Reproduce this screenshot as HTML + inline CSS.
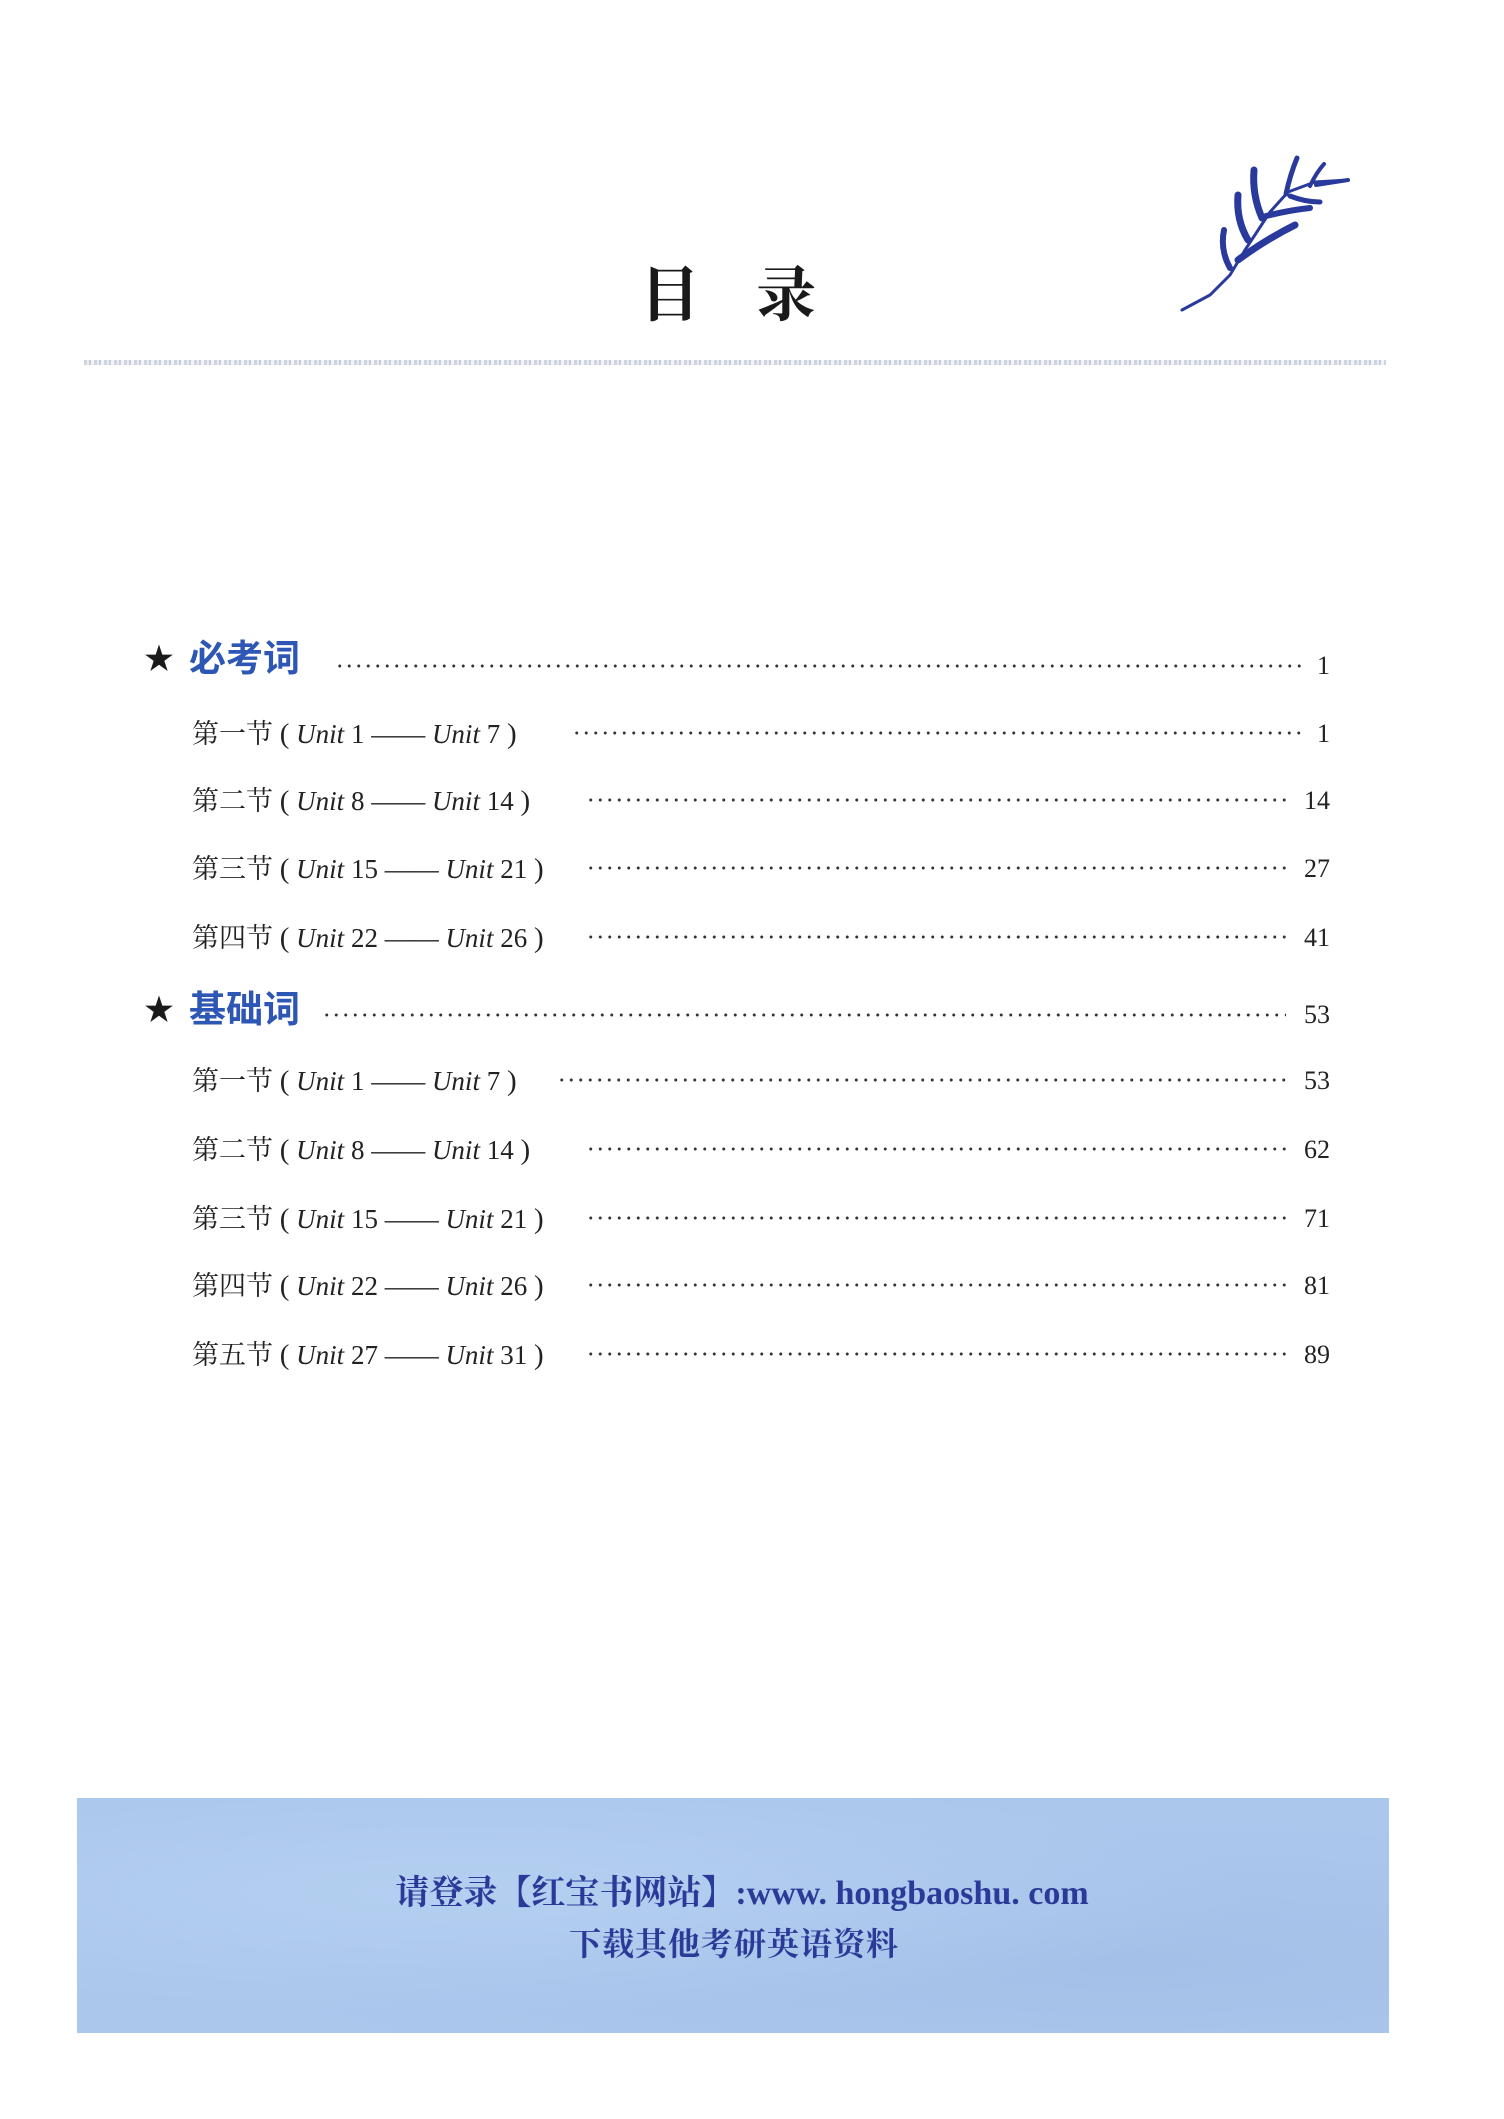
<!DOCTYPE html>
<html><head><meta charset="utf-8">
<style>
html,body{margin:0;padding:0;background:#fff;}
body{width:1504px;height:2119px;position:relative;overflow:hidden;font-family:"Liberation Serif","Noto Serif CJK SC",serif;}
.title{position:absolute;top:258px;left:640px;font-family:"Liberation Serif","Noto Serif CJK SC",serif;font-size:60px;font-weight:bold;color:#1a1a1a;letter-spacing:56px;line-height:76px;}
.rule{position:absolute;left:84px;top:360px;width:1302px;height:5px;background:repeating-linear-gradient(90deg,#c9d0dc 0 3px,#e8ebf1 3px 5px,#bfc7d6 5px 7px,#f2f3f6 7px 10px);opacity:.9;}
.lab{position:absolute;white-space:nowrap;color:#222;font-size:27px;line-height:40px;}
.lab i{font-style:italic;}
.lab .p{font-size:29px;}
.dots{position:absolute;height:6px;background-image:radial-gradient(circle,#333 1.3px,transparent 1.7px);background-size:9.5px 6px;background-repeat:repeat-x;}
.pg{position:absolute;color:#222;font-size:26px;line-height:40px;text-align:right;width:80px;}
.h{color:#2e56b4;font-family:"Liberation Sans","Noto Sans CJK SC",sans-serif;font-weight:bold;font-size:37px;}
.star{position:absolute;left:144px;font-size:30px;color:#1a1a1a;line-height:40px;}
.box{position:absolute;left:77px;top:1798px;width:1312px;height:235px;background:#abc7ec;background-image:radial-gradient(ellipse at 30% 40%,#b4cff0 0,transparent 60%),radial-gradient(ellipse at 80% 70%,#a4c0e8 0,transparent 60%);}
.b1{position:absolute;top:1872px;left:-10px;width:1504px;text-align:center;color:#2b3a98;font-size:34px;font-weight:bold;line-height:44px;font-family:"Liberation Serif","Noto Serif CJK SC",serif;}
.b2{position:absolute;top:1924px;left:-18px;width:1504px;text-align:center;color:#2b3a98;font-size:32px;font-weight:bold;line-height:40px;letter-spacing:1px;font-family:"Liberation Serif","Noto Serif CJK SC",serif;}
</style></head><body>
<div class="title">目录</div>
<svg style="position:absolute;left:1170px;top:140px" width="200" height="190" viewBox="0 0 200 190">
<g fill="none" stroke="#2a3a9c" stroke-linecap="round">
<path d="M12 170 L40 155 L60 135 L75 110 L100 72 L118 52 L145 42 L178 40" stroke-width="3"/>
<path d="M60 128 Q50 110 54 90" stroke-width="6"/>
<path d="M68 120 Q95 100 125 85" stroke-width="7"/>
<path d="M78 100 Q66 80 68 55" stroke-width="7"/>
<path d="M92 78 Q82 55 84 30" stroke-width="7"/>
<path d="M96 76 Q120 70 140 68" stroke-width="6"/>
<path d="M116 54 Q120 35 127 18" stroke-width="5"/>
<path d="M120 56 Q135 62 150 62" stroke-width="5"/>
<path d="M140 46 Q146 33 154 24" stroke-width="4"/>
<path d="M146 45 Q165 42 178 40" stroke-width="4"/>
</g></svg>
<div class="rule"></div>

<div class="star" style="top:640px">★</div>
<div class="lab h" style="left:189px;top:636px;line-height:46px">必考词</div>
<div class="dots" style="left:335px;width:966px;top:663px"></div>
<div class="pg" style="left:1250px;top:646px">1</div>

<div class="lab" style="left:192px;top:714px">第一节 <span class="p">(</span> <i>Unit</i> 1 —— <i>Unit</i> 7 <span class="p">)</span></div>
<div class="dots" style="left:572px;width:730px;top:730px"></div>
<div class="pg" style="left:1250px;top:714px">1</div>

<div class="lab" style="left:192px;top:781px">第二节 <span class="p">(</span> <i>Unit</i> 8 —— <i>Unit</i> 14 <span class="p">)</span></div>
<div class="dots" style="left:586px;width:700px;top:797px"></div>
<div class="pg" style="left:1250px;top:781px">14</div>

<div class="lab" style="left:192px;top:849px">第三节 <span class="p">(</span> <i>Unit</i> 15 —— <i>Unit</i> 21 <span class="p">)</span></div>
<div class="dots" style="left:586px;width:700px;top:865px"></div>
<div class="pg" style="left:1250px;top:849px">27</div>

<div class="lab" style="left:192px;top:918px">第四节 <span class="p">(</span> <i>Unit</i> 22 —— <i>Unit</i> 26 <span class="p">)</span></div>
<div class="dots" style="left:586px;width:700px;top:934px"></div>
<div class="pg" style="left:1250px;top:918px">41</div>

<div class="star" style="top:991px">★</div>
<div class="lab h" style="left:189px;top:987px;line-height:46px">基础词</div>
<div class="dots" style="left:322px;width:964px;top:1012px"></div>
<div class="pg" style="left:1250px;top:995px">53</div>

<div class="lab" style="left:192px;top:1061px">第一节 <span class="p">(</span> <i>Unit</i> 1 —— <i>Unit</i> 7 <span class="p">)</span></div>
<div class="dots" style="left:557px;width:729px;top:1077px"></div>
<div class="pg" style="left:1250px;top:1061px">53</div>

<div class="lab" style="left:192px;top:1130px">第二节 <span class="p">(</span> <i>Unit</i> 8 —— <i>Unit</i> 14 <span class="p">)</span></div>
<div class="dots" style="left:586px;width:700px;top:1146px"></div>
<div class="pg" style="left:1250px;top:1130px">62</div>

<div class="lab" style="left:192px;top:1199px">第三节 <span class="p">(</span> <i>Unit</i> 15 —— <i>Unit</i> 21 <span class="p">)</span></div>
<div class="dots" style="left:586px;width:700px;top:1215px"></div>
<div class="pg" style="left:1250px;top:1199px">71</div>

<div class="lab" style="left:192px;top:1266px">第四节 <span class="p">(</span> <i>Unit</i> 22 —— <i>Unit</i> 26 <span class="p">)</span></div>
<div class="dots" style="left:586px;width:700px;top:1282px"></div>
<div class="pg" style="left:1250px;top:1266px">81</div>

<div class="lab" style="left:192px;top:1335px">第五节 <span class="p">(</span> <i>Unit</i> 27 —— <i>Unit</i> 31 <span class="p">)</span></div>
<div class="dots" style="left:586px;width:700px;top:1351px"></div>
<div class="pg" style="left:1250px;top:1335px">89</div>

<div class="box"></div>
<div class="b1">请登录【红宝书网站】:www. hongbaoshu. com</div>
<div class="b2">下载其他考研英语资料</div>
</body></html>
